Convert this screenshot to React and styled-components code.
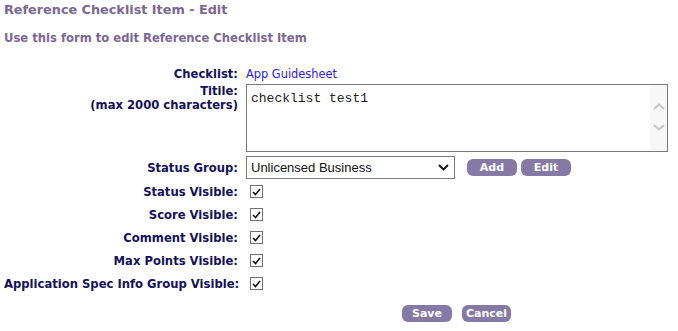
import React from "react";
import styled, { createGlobalStyle } from "styled-components";

const GlobalStyle = createGlobalStyle`
  body {
    margin: 0;
    background: #ffffff;
    font-family: "DejaVu Sans", Verdana, sans-serif;
  }
`;

const Page = styled.div`
  padding: 2px 4px 0 4px;
`;

const Heading = styled.div`
  color: #7a6894;
  font-weight: bold;
  font-size: ${(p) => p.size || 12}px;
  line-height: 15px;
  margin: 0 0 ${(p) => p.gap || 0}px 0;
`;

const Form = styled.div`
  display: grid;
  grid-template-columns: 234px 1fr;
  column-gap: 8px;
  align-items: center;
  margin-top: 20px;
`;

const Label = styled.div`
  text-align: right;
  color: #12115a;
  font-weight: bold;
  font-size: 11.6px;
  line-height: 14px;
  align-self: ${(p) => (p.top ? "start" : "center")};
  padding-top: ${(p) => p.pt || 0}px;
  padding-bottom: ${(p) => p.pb || 0}px;
  white-space: nowrap;
`;

const Cell = styled.div`
  display: flex;
  align-items: center;
  gap: 4px;
  min-height: ${(p) => p.h || 23}px;
  padding-top: ${(p) => p.pt || 0}px;
  padding-bottom: ${(p) => p.pb || 0}px;
`;

const Link = styled.a`
  color: #2a1ae6;
  font-size: 11.4px;
  text-decoration: none;
  cursor: pointer;
`;

const TitleBox = styled.div`
  display: flex;
  width: 422px;
  height: 68px;
  box-sizing: border-box;
  border: 1px solid #7a7a7a;
  margin-top: 2px;
`;

const TextArea = styled.textarea`
  flex: 1;
  border: none;
  padding: 6px 4px;
  font-family: "Liberation Mono", "Courier New", monospace;
  font-size: 13px;
  color: #222;
  resize: none;
  outline: none;
  margin: 0;
  overflow: hidden;
`;

const ScrollTrack = styled.div`
  width: 17px;
  background: #f7f7f7;
  display: flex;
  flex-direction: column;
  align-items: center;
  padding-top: 18px;
  gap: 14px;
`;

const SelectBox = styled.div`
  position: relative;
  width: 209px;
  height: 23px;
  box-sizing: border-box;
  border: 1px solid #7a7a7a;
  display: flex;
  align-items: center;
  padding: 0 4px;
  font-family: "Liberation Sans", Arial, sans-serif;
  font-size: 13px;
  color: #111;
  margin-right: 8px;
`;

const Chevron = styled.svg`
  position: absolute;
  right: 5px;
  top: 7px;
`;

const Button = styled.button`
  background: #857aa6;
  color: #ffffff;
  border: none;
  border-radius: 6px;
  font-family: "DejaVu Sans", Verdana, sans-serif;
  font-weight: bold;
  font-size: 11px;
  height: 17px;
  width: ${(p) => p.w || 50}px;
  padding: 0;
  cursor: pointer;
`;

const Check = styled.span`
  display: inline-flex;
  align-items: center;
  justify-content: center;
  width: 13px;
  height: 13px;
  box-sizing: border-box;
  border: 1px solid #707070;
  background: #fff;
  margin-left: 4px;
`;

const Footer = styled.div`
  display: flex;
  gap: 10px;
  padding-left: 398px;
  margin-top: 10px;
`;

const CheckBox = () => (
  <Check>
    <svg width="9" height="8" viewBox="0 0 9 8">
      <path d="M1 4 L3.5 6.5 L8 1" stroke="#111" strokeWidth="1.6" fill="none" />
    </svg>
  </Check>
);

const Arrow = ({ up }) => (
  <svg width="12" height="7" viewBox="0 0 12 7">
    <path
      d={up ? "M1 6 L6 1.5 L11 6" : "M1 1 L6 5.5 L11 1"}
      stroke="#c4c4c4"
      strokeWidth="1.8"
      fill="none"
    />
  </svg>
);

const checks = [
  "Status Visible:",
  "Score Visible:",
  "Comment Visible:",
  "Max Points Visible:",
  "Application Spec Info Group Visible:",
];

export default function App() {
  return (
    <Page>
      <GlobalStyle />
      <Heading size={12.8} gap={14}>Reference Checklist Item - Edit</Heading>
      <Heading size={11.6}>Use this form to edit Reference Checklist Item</Heading>
      <Form>
        <Label>Checklist:</Label>
        <Cell h={16}>
          <Link>App Guidesheet</Link>
        </Cell>
        <Label top pt={2}>
          Titile:
          <br />
          (max 2000 characters)
        </Label>
        <Cell h={70}>
          <TitleBox>
            <TextArea defaultValue="checklist test1" />
            <ScrollTrack>
              <Arrow up />
              <Arrow />
            </ScrollTrack>
          </TitleBox>
        </Cell>
        <Label pt={4} pb={1}>Status Group:</Label>
        <Cell h={23} pt={4} pb={1}>
          <SelectBox>
            Unlicensed Business
            <Chevron width="11" height="7" viewBox="0 0 11 7">
              <path d="M1 1 L5.5 5.5 L10 1" stroke="#111" strokeWidth="1.8" fill="none" />
            </Chevron>
          </SelectBox>
          <Button w={50}>Add</Button>
          <Button w={50}>Edit</Button>
        </Cell>
        {checks.map((c) => (
          <React.Fragment key={c}>
            <Label>{c}</Label>
            <Cell h={23}>
              <CheckBox />
            </Cell>
          </React.Fragment>
        ))}
      </Form>
      <Footer>
        <Button w={50}>Save</Button>
        <Button w={49}>Cancel</Button>
      </Footer>
    </Page>
  );
}
